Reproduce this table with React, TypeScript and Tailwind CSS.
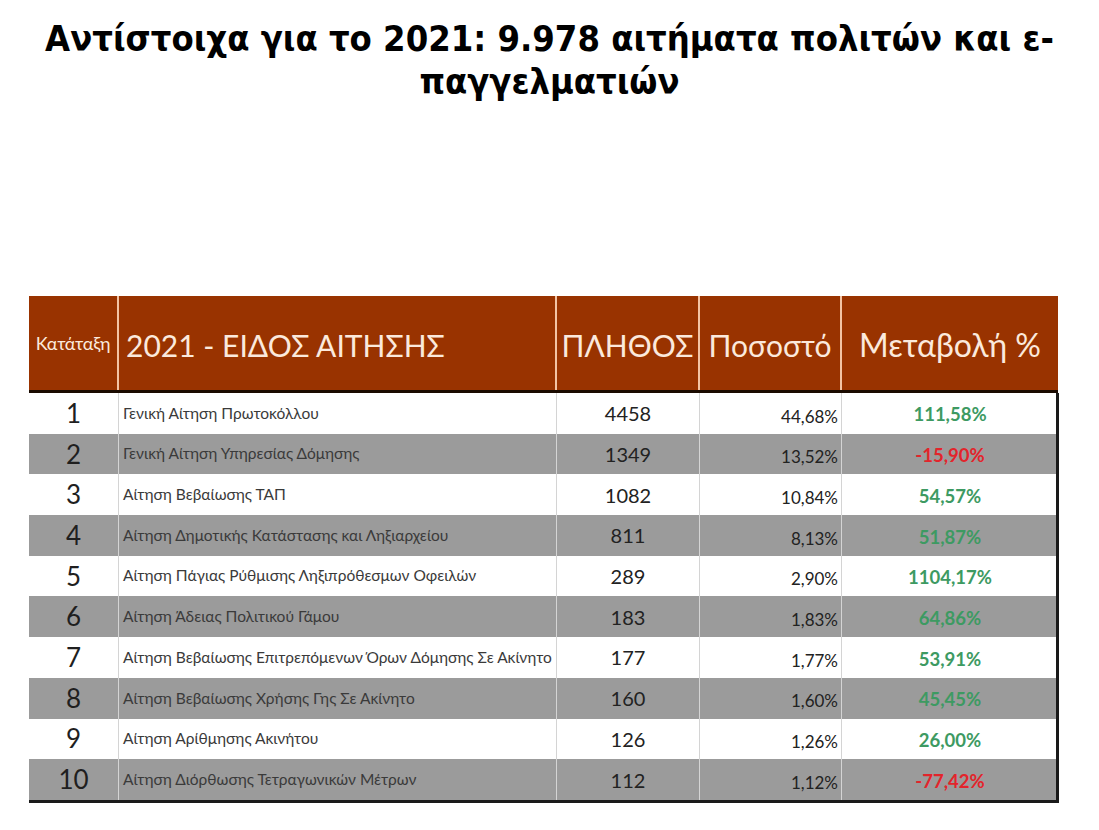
const rows = [
  { rank: 1, name: "Γενική Αίτηση Πρωτοκόλλου", count: 4458, pct: "44,68%", change: "111,58%", up: true },
  { rank: 2, name: "Γενική Αίτηση Υπηρεσίας Δόμησης", count: 1349, pct: "13,52%", change: "-15,90%", up: false },
  { rank: 3, name: "Αίτηση Βεβαίωσης ΤΑΠ", count: 1082, pct: "10,84%", change: "54,57%", up: true },
  { rank: 4, name: "Αίτηση Δημοτικής Κατάστασης και Ληξιαρχείου", count: 811, pct: "8,13%", change: "51,87%", up: true },
  { rank: 5, name: "Αίτηση Πάγιας Ρύθμισης Ληξιπρόθεσμων Οφειλών", count: 289, pct: "2,90%", change: "1104,17%", up: true },
  { rank: 6, name: "Αίτηση Άδειας Πολιτικού Γάμου", count: 183, pct: "1,83%", change: "64,86%", up: true },
  { rank: 7, name: "Αίτηση Βεβαίωσης Επιτρεπόμενων Όρων Δόμησης Σε Ακίνητο", count: 177, pct: "1,77%", change: "53,91%", up: true },
  { rank: 8, name: "Αίτηση Βεβαίωσης Χρήσης Γης Σε Ακίνητο", count: 160, pct: "1,60%", change: "45,45%", up: true },
  { rank: 9, name: "Αίτηση Αρίθμησης Ακινήτου", count: 126, pct: "1,26%", change: "26,00%", up: true },
  { rank: 10, name: "Αίτηση Διόρθωσης Τετραγωνικών Μέτρων", count: 112, pct: "1,12%", change: "-77,42%", up: false },
];

const cols = "grid grid-cols-[90px_438px_143px_142px_216px]";

export default function App() {
  return (
    <div className="w-[1099px] h-[830px] bg-white font-['Lato','Open_Sans',sans-serif]">
      <h1 className="pt-[17px] h-[102px] text-center text-[36px] leading-[43px] font-bold text-black whitespace-nowrap font-['DejaVu_Sans_Condensed','DejaVu_Sans',sans-serif] [font-stretch:condensed]">
        Αντίστοιχα για το 2021: 9.978 αιτήματα πολιτών και ε-
        <br />
        παγγελματιών
      </h1>

      <div className="ml-[29px] mt-[194px] w-[1030px]">
        <div className={`${cols} h-[97px] bg-[#993300] text-[#fbe9dc] border-b-[3px] border-[#1a0a00] w-[1029px]`}>
          <div className="flex items-center justify-center text-[18px] tracking-[-0.3px] border-r-2 border-[#f3c4a4]">Κατάταξη</div>
          <div className="flex items-center pl-[7px] pt-[4px] text-[30px] border-r-2 border-[#f3c4a4]">2021 - ΕΙΔΟΣ ΑΙΤΗΣΗΣ</div>
          <div className="flex items-center justify-center pt-[4px] text-[30px] border-r-2 border-[#f3c4a4]">ΠΛΗΘΟΣ</div>
          <div className="flex items-center justify-center pt-[4px] text-[30px] border-r-2 border-[#f3c4a4]">Ποσοστό</div>
          <div className="flex items-center justify-center pt-[4px] text-[32px]">Μεταβολή %</div>
        </div>

        <div className="border-r-[3px] border-b-[3px] border-[#1a1a1a]">
          {rows.map((r) => (
            <div
              key={r.rank}
              className={`${cols} h-[40.7px] ${r.rank % 2 === 0 ? "bg-[#9b9b9b]" : "bg-white"}`}
            >
              <div className="flex items-center justify-center text-[26px] text-[#1f1f1f] border-r border-[#d4d4d4]">{r.rank}</div>
              <div className="flex items-center pl-[4px] text-[15.5px] text-[#3a3a3a] border-r border-[#d4d4d4] whitespace-nowrap overflow-hidden">{r.name}</div>
              <div className="flex items-center justify-center text-[20px] text-[#222] border-r border-[#d4d4d4]">{r.count}</div>
              <div className="flex items-center justify-end pr-[3px] pt-[6px] text-[17px] text-[#222] border-r border-[#d4d4d4]">{r.pct}</div>
              <div
                className={`flex items-center justify-center pt-[4px] text-[18.5px] font-bold ${r.up ? "text-[#3d9a62]" : "text-[#e3242b]"}`}
              >
                {r.change}
              </div>
            </div>
          ))}
        </div>
      </div>
    </div>
  );
}
